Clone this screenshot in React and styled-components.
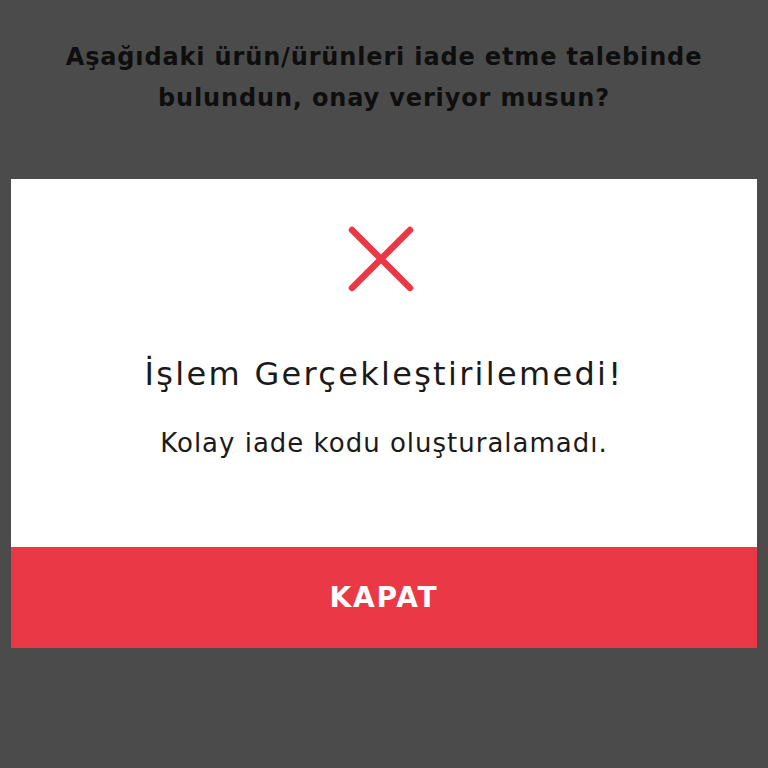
import React from 'react';
import styled, { createGlobalStyle } from 'styled-components';

const GlobalStyle = createGlobalStyle`
	html, body {
		margin: 0;
		padding: 0;
		background: #4b4b4b;
	}
	body {
		font-family: 'DejaVu Sans', 'Open Sans', sans-serif;
	}
`;

const Page = styled.div`
	width: 768px;
	height: 768px;
	background: #4b4b4b;
	display: flex;
	flex-direction: column;
	align-items: center;
	padding-top: 37px;
	box-sizing: border-box;
`;

const Question = styled.h1`
	margin: 0;
	width: 700px;
	text-align: center;
	font-size: 24px;
	line-height: 41px;
	font-weight: 700;
	color: #0e0e0e;
	letter-spacing: 0.85px;
`;

const Modal = styled.div`
	margin-top: 60px;
	width: 746px;
	background: #fff;
	display: flex;
	flex-direction: column;
`;

const Body = styled.div`
	height: 368px;
	display: flex;
	flex-direction: column;
	align-items: center;
	padding-top: 46px;
	box-sizing: border-box;
`;

const IconWrap = styled.div`
	display: flex;
	margin-right: 6px;
`;

const Title = styled.div`
	margin-top: 62px;
	font-size: 32px;
	line-height: 38px;
	color: #1a1a1a;
	letter-spacing: 2.3px;
`;

const Message = styled.div`
	margin-top: 35px;
	font-size: 26px;
	line-height: 30px;
	color: #1a1a1a;
	letter-spacing: 1px;
`;

const CloseButton = styled.button`
	height: 101px;
	border: none;
	background: #ea3846;
	color: #fff;
	font-family: inherit;
	font-size: 28px;
	font-weight: 700;
	letter-spacing: 1.8px;
	cursor: pointer;
`;

const ErrorIcon = () => (
	<IconWrap>
		<svg width="68" height="68" viewBox="0 0 68 68">
			<path
				d="M5 5 L63 63 M63 5 L5 63"
				stroke="#ea3846"
				strokeWidth="6.5"
				strokeLinecap="round"
				fill="none"
			/>
		</svg>
	</IconWrap>
);

const App = () => (
	<>
		<GlobalStyle />
		<Page>
			<Question>
				Aşağıdaki ürün/ürünleri iade etme talebinde bulundun, onay veriyor musun?
			</Question>
			<Modal>
				<Body>
					<ErrorIcon />
					<Title>İşlem Gerçekleştirilemedi!</Title>
					<Message>Kolay iade kodu oluşturalamadı.</Message>
				</Body>
				<CloseButton>KAPAT</CloseButton>
			</Modal>
		</Page>
	</>
);

export default App;
